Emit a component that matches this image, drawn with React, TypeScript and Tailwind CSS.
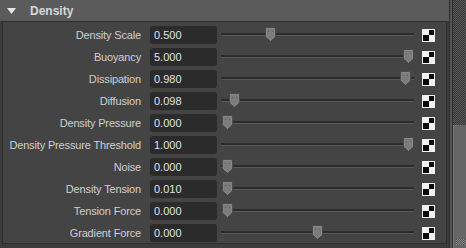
import React from "react";

const rows: { label: string; value: string; pos: number }[] = [
  { label: "Density Scale", value: "0.500", pos: 44 },
  { label: "Buoyancy", value: "5.000", pos: 182 },
  { label: "Dissipation", value: "0.980", pos: 179 },
  { label: "Diffusion", value: "0.098", pos: 8 },
  { label: "Density Pressure", value: "0.000", pos: 1 },
  { label: "Density Pressure Threshold", value: "1.000", pos: 182 },
  { label: "Noise", value: "0.000", pos: 1 },
  { label: "Density Tension", value: "0.010", pos: 1 },
  { label: "Tension Force", value: "0.000", pos: 1 },
  { label: "Gradient Force", value: "0.000", pos: 91 },
];

function Handle({ left }: { left: number }) {
  return (
    <svg
      width="11"
      height="15"
      viewBox="0 0 11 15"
      className="absolute top-[3px]"
      style={{ left }}
    >
      <path d="M1.5 0.5 H9.5 Q10.5 0.5 10.5 1.5 V10 L5.5 14.5 L0.5 10 V1.5 Q0.5 0.5 1.5 0.5 Z" fill="#727272" stroke="#4a4a4a" />
      <path d="M1.5 1.5 H9.5 V9.6 L5.5 13.2 L1.5 9.6 Z" fill="#7c7c7c" stroke="#8e8e8e" strokeWidth="0.6" />
      <rect x="3" y="4" width="1" height="1" fill="#5a5a5a" />
      <rect x="7" y="4" width="1" height="1" fill="#5a5a5a" />
    </svg>
  );
}

function Checker() {
  return (
    <div className="w-[13px] h-[13px] border border-[#f2f2f2] grid grid-cols-2 grid-rows-2 bg-white">
      <div className="bg-[#f2f2f2]" />
      <div className="bg-[#0a0a0a]" />
      <div className="bg-[#0a0a0a]" />
      <div className="bg-[#f2f2f2]" />
    </div>
  );
}

export default function App() {
  return (
    <div
      className="w-[466px] h-[248px] overflow-hidden bg-[#444444] flex"
      style={{ fontFamily: '"Liberation Sans", Arial, sans-serif' }}
    >
      <div className="w-[449px] flex flex-col">
        <div className="h-[21px] bg-[#5b5b5b] flex items-center shrink-0">
          <svg width="9" height="6" viewBox="0 0 9 6" className="ml-[7px]">
            <path d="M0 0 H9 L4.5 6 Z" fill="#e4e4e4" />
          </svg>
          <span className="ml-[14px] text-[12px] font-bold text-[#d3d9df] leading-none">Density</span>
        </div>
        <div className="flex-1 flex bg-[#3c3c3c] pl-[2px]">
          <div className="w-[445px] h-[223px] border border-[#2e2e2e] bg-[#444444] pt-[2px]">
            {rows.map((r) => (
              <div key={r.label} className="h-[22px] flex items-center">
                <div className="w-[138px] text-right text-[11px] tracking-[-0.15px] text-[#d0d0d0] whitespace-nowrap">
                  {r.label}
                </div>
                <div className="ml-[9px] w-[67px] h-[18px] rounded-[3px] bg-[#2b2b2b] flex items-center pl-[4px] text-[11px] text-[#e2e2e2]">
                  {r.value}
                </div>
                <div className="ml-[4px] w-[193px] h-[22px] relative">
                  <div className="absolute left-0 right-0 top-[9px] h-[2px] bg-[#2c2c2c]" />
                  <div className="absolute left-0 right-0 top-[11px] h-[1px] bg-[#585858]" />
                  <Handle left={r.pos} />
                </div>
                <div className="ml-[8px]">
                  <Checker />
                </div>
              </div>
            ))}
          </div>
        </div>
      </div>
      <div className="w-[17px] flex">
        <div className="w-[1px] bg-[#2e2e2e]" />
        <div className="w-[2px] bg-[#565656]" />
        <div className="w-[1px] bg-[#2e2e2e]" />
        <div className="flex-1 flex flex-col">
          <div className="h-[125px] bg-[repeating-conic-gradient(#575757_0_25%,#393939_0_50%)] bg-[length:2px_2px]" />
          <div className="flex-1 bg-[#666666] border-l border-[#777777] flex flex-col justify-end items-center pb-[3px]">
            <div className="w-[9px] h-[6px] bg-[repeating-conic-gradient(#888_0_25%,#555_0_50%)] bg-[length:2px_2px]" />
          </div>
        </div>
      </div>
    </div>
  );
}
